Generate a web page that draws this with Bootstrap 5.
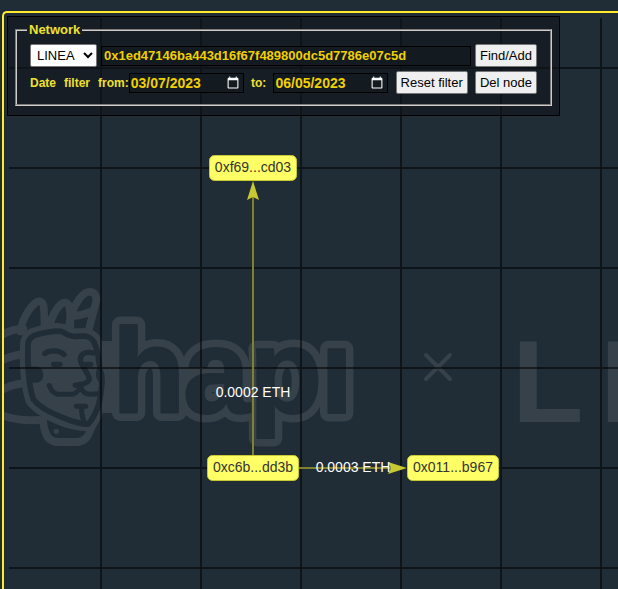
<!DOCTYPE html>
<html lang="en">
<head>
<meta charset="utf-8">
<meta name="viewport" content="width=device-width, initial-scale=1">
<title>Network explorer</title>
<link href="https://cdn.jsdelivr.net/npm/bootstrap@5.3.0/dist/css/bootstrap.min.css" rel="stylesheet">
<style>
  body { background: #202c36; font: 13px/16px "Liberation Sans", Arial, sans-serif; padding: 11px 0 0 2px; }
  .stage { border: 2px solid #ffeb2a; border-width: 2px 0 0 2px; border-radius: 5px 0 0 0; min-height: calc(100vh - 11px); padding: 3px; }
  .graph { font-size: 14px; }
  .graph .edge-text { fill: #fff; }
  .graph .node-text { fill: #343434; }
  .graph .node-box { fill: #ffff66; stroke: #c8c832; }
  .wm-fill { fill: #36414a; }
  .wm-line { fill: none; stroke: #36414a; stroke-linecap: round; stroke-linejoin: round; }
  .bg-line { fill: none; stroke: #202c36; stroke-linecap: round; stroke-linejoin: round; }
  .bg-fill { fill: #202c36; }
  .word { font-weight: 700; }
  .panel { max-width: 553px; border: 1px solid #000; background: rgba(16, 20, 26, .6); padding: 5px 7px 9px; }
  .panel fieldset { border: 2px groove #d0cccc; padding: 6px 13px 10px; color: #f0e130; font-weight: 700; }
  .panel legend { float: none; width: auto; font-size: 13px; line-height: 16px; margin: 0 0 0 -3px; padding: 0 2px; }
  .panel label { font-size: 12px; }
  .ctl { height: 23px; border: 1px solid #767676; border-radius: 2px; background: #efefef; color: #000; padding: 0 4px; font-weight: 400; }
  .ctl-select { width: 67px; background: #fff; padding: 0 2px; }
  .dark-input { height: 20px; min-width: 0; border: 1px solid #000; background: #131a20; color: #f0d000; font-weight: 700; padding: 0 2px; color-scheme: dark; }
  .dark-date { width: 115px; font-size: 14px; padding: 0 1px; }
</style>
</head>
<body class="overflow-hidden">
<main class="stage position-relative overflow-hidden">
  <svg class="graph position-absolute top-0 start-0 w-100 h-100" role="img" aria-label="Transaction graph">
    <defs>
      <pattern id="grid" width="100" height="100" patternUnits="userSpaceOnUse" x="100" y="67">
        <path d="M0 1H100M1 0V100" stroke="#000" stroke-opacity=".55" stroke-width="2" fill="none"/>
      </pattern>
      <text id="word" x="112 183 249 320" y="413">hapı</text>
    </defs>
    <g transform="translate(-4 -13)">
      <rect class="wm-fill" x="100" y="341" width="15" height="72"/>
      <g class="word" font-size="120" stroke-linejoin="round">
        <use href="#word" fill="#36414a" stroke="#36414a" stroke-width="17"/>
        <use href="#word" fill="#202c36" stroke="#202c36" stroke-width="2"/>
        <text class="wm-fill" font-size="117" x="512 600" y="422">LI</text>
      </g>
      <path class="wm-line" stroke-width="4" d="M426 355L450 379M450 355L426 379"/>
      <g transform="translate(0 280) scale(.333333)">
        <path class="wm-line" stroke-width="24" d="M-10 175Q30 145 70 148M-10 250Q30 225 80 222M-10 340Q30 310 85 310M-10 395Q30 425 120 420"/>
        <path class="wm-line" stroke-width="23" d="M62 155C65 112 102 62 118 64C134 66 132 80 134 150M147 142C158 98 181 66 196 68C209 70 211 84 211 138M207 134C215 85 242 40 265 36C283 34 294 48 287 70L268 143M220 108Q240 108 280 92"/>
        <path class="wm-line" stroke-width="24" d="M130 422C134 465 145 486 175 486L235 486C260 482 264 466 275 440"/>
        <path class="wm-line" stroke-width="48" d="M84 192C86 170 105 164 130 159C160 153 180 150 191 157C212 174 230 168 253 168C281 171 286 190 294 225L300 300C298 350 294 392 265 432C245 442 130 398 100 358C87 320 82 250 84 192Z"/>
        <path class="wm-fill" d="M84 192C86 170 105 164 130 159C160 153 180 150 191 157C212 174 230 168 253 168C281 171 286 190 294 225L305 300C303 350 298 392 265 432C245 442 130 398 100 358C87 320 82 250 84 192Z"/>
        <path class="bg-line" stroke-width="17" d="M84 192C86 170 105 164 130 159C160 153 180 150 191 157C212 174 230 168 253 168C281 171 286 190 294 225L298 255M306 305C303 350 298 392 265 432C245 438 130 398 100 358C87 320 82 250 84 192"/>
        <path class="bg-fill" d="M90 262C115 255 130 265 130 285C130 304 115 312 92 307ZM300 255C285 268 283 294 300 310L313 308C316 290 313 270 300 255Z"/>
        <path class="bg-line" stroke-width="16" d="M135 220C148 210 178 210 192 223M280 219C258 213 241 222 241 239C243 260 268 280 268 299C260 315 240 312 226 316"/>
        <path class="bg-line" stroke-width="15" d="M148 317C153 330 160 340 172 343L215 343C230 342 236 328 243 322C248 338 256 343 272 343L295 341M229 379H257M244 379C245 400 248 415 252 425"/>
        <path class="bg-line" stroke-width="16" d="M161 253H180M258 253H272"/>
        <path class="bg-fill" d="M141 422C175 440 220 451 257 453C255 465 245 470 230 470L190 474C155 472 144 455 141 422Z"/>
        <circle class="wm-fill" cx="169" cy="454" r="8"/>
      </g>
      <rect x="9" y="18" width="100%" height="100%" fill="url(#grid)"/>
      <path d="M253 456V196M299 468H392" stroke="#7f812d" stroke-width="2"/>
      <path d="M253 181L259 200L253 197L247 200ZM407 468L388 462L391 468L388 474Z" fill="#c8c832"/>
      <g class="node-box">
        <rect x="209.5" y="155.5" width="87" height="25" rx="5"/>
        <rect x="207.5" y="455.5" width="91" height="25" rx="5"/>
        <rect x="407.5" y="455.5" width="91" height="25" rx="5"/>
      </g>
      <g text-anchor="middle">
        <text class="node-text" x="253" y="172">0xf69...cd03</text>
        <text class="node-text" x="253" y="472">0xc6b...dd3b</text>
        <text class="node-text" x="453" y="472">0x011...b967</text>
        <text class="edge-text" x="253" y="397">0.0002 ETH</text>
        <text class="edge-text" x="353" y="472">0.0003 ETH</text>
      </g>
    </g>
  </svg>

  <form class="panel position-relative">
    <fieldset>
      <legend>Network</legend>
      <div class="d-flex align-items-center gap-1 mb-1">
        <select class="ctl ctl-select" aria-label="Chain"><option>LINEA</option></select>
        <input class="dark-input flex-grow-1" type="text" aria-label="Address" value="0x1ed47146ba443d16f67f489800dc5d7786e07c5d">
        <button class="ctl" type="button">Find/Add</button>
      </div>
      <div class="d-flex align-items-center justify-content-between">
        <div class="d-flex align-items-center">
          <label class="d-flex gap-2" for="from"><span>Date</span><span>filter</span><span>from:</span></label>
          <input class="dark-input dark-date" type="date" id="from" value="2023-03-07">
        </div>
        <label for="to">to:</label>
        <input class="dark-input dark-date" type="date" id="to" value="2023-06-05">
        <button class="ctl" type="button">Reset filter</button>
        <button class="ctl" type="button">Del node</button>
      </div>
    </fieldset>
  </form>
</main>
<script src="https://cdn.jsdelivr.net/npm/bootstrap@5.3.0/dist/js/bootstrap.bundle.min.js"></script>
</body>
</html>
